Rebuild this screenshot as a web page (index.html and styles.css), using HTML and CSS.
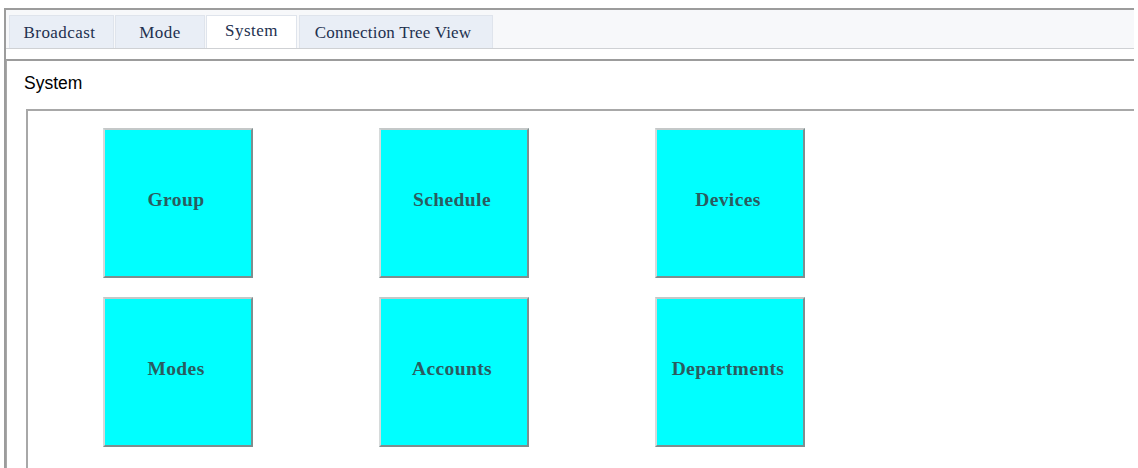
FILE: index.html
```html
<!DOCTYPE html>
<html>
<head>
<meta charset="utf-8">
<link rel="stylesheet" href="styles.css">
</head>
<body>
<div class="frame">
  <div class="tabbar">
    <div class="tab tab-broadcast">Broadcast</div>
    <div class="tab tab-mode">Mode</div>
    <div class="tab tab-system active">System</div>
    <div class="tab tab-tree">Connection Tree View</div>
  </div>
  <div class="panel">
    <div class="panel-title">System</div>
    <div class="box">
      <div class="grid">
        <div class="tile">Group</div>
        <div class="tile">Schedule</div>
        <div class="tile">Devices</div>
        <div class="tile">Modes</div>
        <div class="tile">Accounts</div>
        <div class="tile">Departments</div>
      </div>
    </div>
  </div>
</div>
</body>
</html>
```
FILE: styles.css
```css
html, body {
  margin: 0;
  padding: 0;
  background: #ffffff;
  overflow: hidden;
  height: 468px;
}

.frame {
  margin: 8px 0 0 4px;
  width: 1130px;
  height: 460px;
  border-top: 2px solid #9c9c9c;
  border-left: 2px solid #9c9c9c;
  box-sizing: border-box;
  display: flex;
  flex-direction: column;
  overflow: hidden;
}

.tabbar {
  display: flex;
  align-items: flex-end;
  gap: 1px;
  height: 38px;
  flex: none;
  padding-left: 3px;
  background: #f7f8fa;
  border-bottom: 1px solid #cfd1d4;
  margin-bottom: 10px;
}

.tab {
  height: 33px;
  box-sizing: border-box;
  display: flex;
  align-items: center;
  justify-content: center;
  padding-top: 1px;
  font-family: "Liberation Serif", "Times New Roman", serif;
  font-size: 17px;
  letter-spacing: 0.45px;
  color: #22304f;
  background: #e9eef6;
  border: 1px solid #dfe4ec;
  border-bottom: none;
}

.tab.active {
  background: #ffffff;
  padding-top: 0;
  padding-bottom: 2px;
}

.tab-broadcast { width: 105px; padding-right: 4px; }
.tab-mode { width: 90px; }
.tab-system { width: 91px; }
.tab-tree { width: 194px; margin-left: 1px; padding-right: 6px; letter-spacing: 0.2px; }

.panel {
  flex: 1;
  display: flex;
  flex-direction: column;
  border-top: 2px solid #9c9c9c;
  border-left: 1px solid #a8a8a8;
}

.panel-title {
  margin-top: 12px;
  padding-left: 17px;
  font-family: "Liberation Sans", Arial, sans-serif;
  font-size: 17.5px;
  line-height: 20px;
  color: #000000;
}

.box {
  flex: 1;
  margin-top: 16px;
  margin-left: 19px;
  border-top: 2px solid #a8a8a8;
  border-left: 2px solid #a8a8a8;
  padding: 17px 0 0 75px;
}

.grid {
  display: grid;
  grid-template-columns: repeat(3, 150px);
  grid-auto-rows: 150px;
  column-gap: 126px;
  row-gap: 19px;
}

.tile {
  box-sizing: border-box;
  background: #00ffff;
  border: 2px solid;
  border-color: #c4c8c8 #7e8e8e #7e8e8e #d6dada;
  display: flex;
  align-items: center;
  justify-content: center;
  padding: 0 4px 6px 0;
  font-family: "Liberation Serif", "Times New Roman", serif;
  font-weight: bold;
  font-size: 19.5px;
  letter-spacing: 0.4px;
  color: #2a5c60;
}
```
